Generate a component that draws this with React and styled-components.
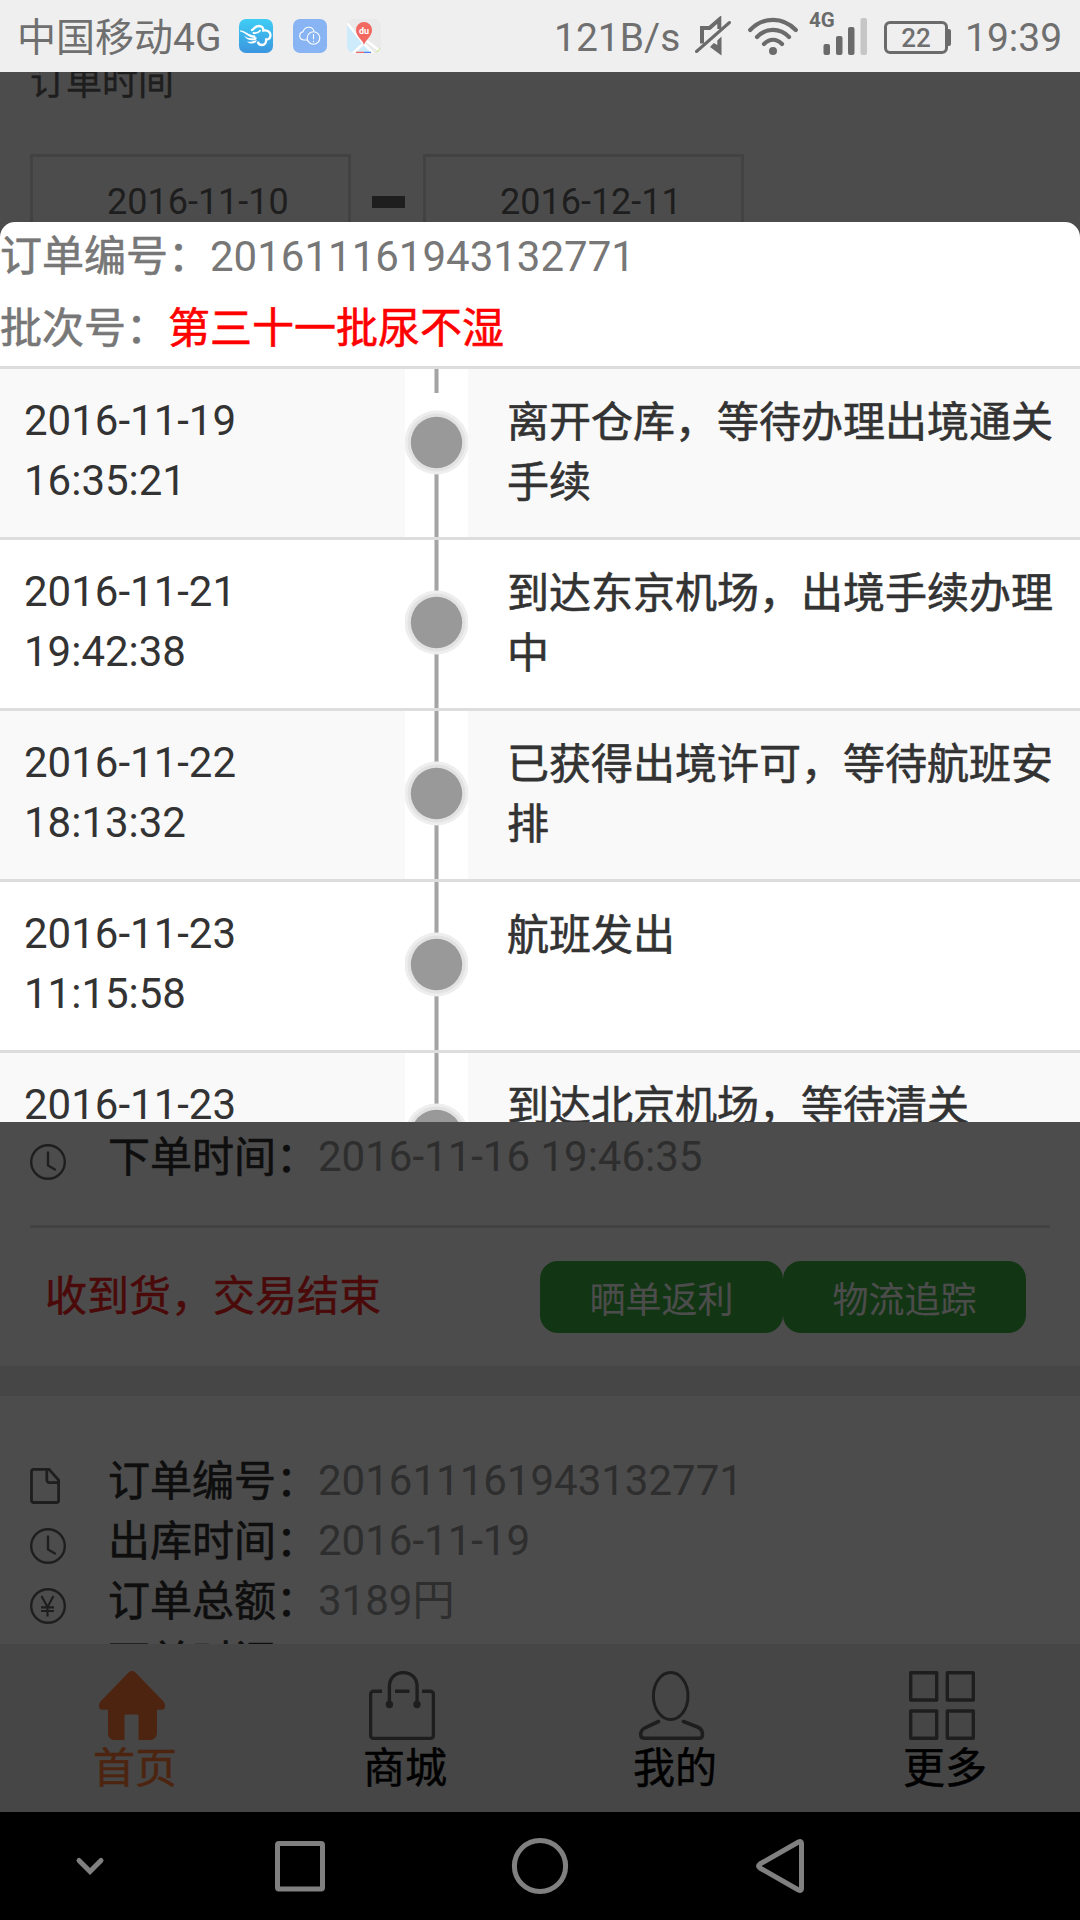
import React from "react";
import styled, { createGlobalStyle } from "styled-components";

const steps = [
  { date: "2016-11-19", time: "16:35:21", text: "离开仓库，等待办理出境通关手续" },
  { date: "2016-11-21", time: "19:42:38", text: "到达东京机场，出境手续办理中" },
  { date: "2016-11-22", time: "18:13:32", text: "已获得出境许可，等待航班安排" },
  { date: "2016-11-23", time: "11:15:58", text: "航班发出" },
  { date: "2016-11-23", time: "", text: "到达北京机场，等待清关" },
];

const ClockIcon = () => (
  <svg width="36" height="36" viewBox="0 0 36 36" fill="none" stroke="#666" strokeWidth="2.4">
    <circle cx="18" cy="18" r="16.8" />
    <path d="M18 8.500v13l7 4" strokeLinecap="round" strokeLinejoin="round" />
  </svg>
);

const FileIcon = () => (
  <svg width="36" height="36" viewBox="0 0 36 36" fill="none" stroke="#666" strokeWidth="2.8">
    <path d="M3.5 1.4H19L28.6 12v20.5a2 2 0 0 1-2 2H3.5a2 2 0 0 1-2-2V3.4a2 2 0 0 1 2-2z" />
    <path d="M16.8 1.4V12a2.6 2.6 0 0 0 2.6 2.6h9.2" />
  </svg>
);

const YenIcon = () => (
  <svg width="36" height="36" viewBox="0 0 36 36" fill="none" stroke="#666" strokeWidth="2.2">
    <circle cx="18" cy="18" r="16.8" strokeWidth="2.4" />
    <path d="M11.5 8l6 11 6-11M17.5 19v9.5M11 19.3h13M11 23h13" />
  </svg>
);

const WeatherAppIcon = () => (
  <svg width="34" height="34" viewBox="0 0 34 34">
    <defs>
      <linearGradient id="sky" x1="0" y1="0" x2="0" y2="1">
        <stop offset="0" stopColor="#3fcdf5" />
        <stop offset="1" stopColor="#3b96df" />
      </linearGradient>
    </defs>
    <rect width="34" height="34" rx="7" fill="url(#sky)" />
    <path d="M1 11.5c5-.8 7 4.500 15 5l1 2.500C9 19 7 13.500 1 12.500z" fill="#fff" />
    <path d="M5 16.500c4 3.500 8 3 13 2l-1 2.300c-5 1.200-9 .7-12-4.300z" fill="#fff" />
    <path d="M8 22.500c4 1 6-.5 10-1.500l-1.500 2.500c-3 1.500-6 1.500-8.500-1z" fill="#fff" />
    <g fill="none" stroke="#fff" strokeWidth="2.300" strokeLinecap="round">
      <path d="M13 11c2-.5 2.500-4 7-4 3 0 4.500 2 4.300 4.500 4-.5 7 1 7.200 4.500 0 2.800-1.800 4.500-4.300 4.500 0 3.500-1.700 5.500-4.200 5.500-2.500 0-3.500-1.200-4-2.500" />
      <path d="M14.500 14c3 .5 5-.2 6.500-2.200" strokeWidth="1.800" />
    </g>
  </svg>
);

const CloudAppIcon = () => (
  <svg width="34" height="34" viewBox="0 0 34 34">
    <rect width="34" height="34" rx="7" fill="#88b4f4" />
    <g fill="none" stroke="#fff" strokeWidth="1.1">
      <path d="M14 21H10.500a4.200 4.200 0 0 1-.4-8.300C11 9.800 13 8.300 15.700 8.300c3 0 5 2 5.300 4.200" />
      <circle cx="20.500" cy="19" r="6.300" />
      <path d="M20.500 15v5.300M20.500 21.800v1.500" />
    </g>
  </svg>
);

const MapAppIcon = () => (
  <svg width="34" height="34" viewBox="0 0 34 34">
    <defs>
      <clipPath id="tile">
        <rect width="34" height="34" rx="7" />
      </clipPath>
    </defs>
    <g clipPath="url(#tile)">
      <rect width="34" height="34" fill="#eaeaea" />
      <path d="M0 6l16 18-11 10H0z" fill="#cdebfb" />
      <path d="M16 25l8 9H8z" fill="#cdebfb" />
      <path d="M0 4l17 21 10 10" stroke="#fff" strokeWidth="2.500" fill="none" />
      <path d="M5 35l11-10M20 22l14 11" stroke="#fff" strokeWidth="2.500" fill="none" />
      <path d="M28 34l6-6v6z" fill="#d3eba4" />
      <path d="M9 33.500h8" stroke="#f2675f" strokeWidth="1.500" />
      <path d="M17 33.500h7" stroke="#4f80f0" strokeWidth="1.500" />
      <path d="M17 26c-.8-5-8-8-8-15a8 8 0 0 1 16 0c0 7-7.200 10-8 15z" fill="#f2675f" />
      <text x="17" y="14.500" textAnchor="middle" fontSize="9" fontWeight="700" fontFamily="Roboto" fill="#fff">
        du
      </text>
    </g>
  </svg>
);

const MuteIcon = () => (
  <svg width="36" height="40" viewBox="0 0 36 40" fill="none" stroke="#6b6b6b">
    <path d="M7 27.500V12h7.500L24.300 3.500V13" strokeWidth="4" />
    <path d="M15 31l11.500 8.500V20.500l-4.200 4V29l-3.500-2z" fill="#6b6b6b" stroke="none" />
    <path d="M1.500 35.500L34.500 6.500" strokeWidth="3" strokeLinecap="round" />
  </svg>
);

const WifiIcon = () => (
  <svg width="50" height="38" viewBox="0 0 50 38" fill="none" stroke="#6b6b6b" strokeWidth="4.2" strokeLinecap="round">
    <path d="M2.200 13C15-.6 35-.6 47.800 13" />
    <path d="M9 20C18 10.500 32 10.500 41 20" />
    <path d="M16 27c5.500-5.500 12.500-5.500 18 0" />
    <circle cx="25" cy="34" r="4" fill="#6b6b6b" stroke="none" />
  </svg>
);

const SignalIcon = () => (
  <svg width="60" height="46" viewBox="0 0 60 46" fill="#6b6b6b">
    <text x="0" y="17" fontSize="20.5" fontWeight="700" fontFamily="Roboto">
      4G
    </text>
    <rect x="14.500" y="34" width="6.500" height="11" rx="2" />
    <rect x="27" y="26" width="6.500" height="19" rx="2" />
    <rect x="39" y="17" width="6.500" height="28" rx="2" />
    <rect x="51.500" y="8" width="6.500" height="37" rx="2" fill="#c6c6c6" />
  </svg>
);

const HomeIcon = () => (
  <svg width="66" height="69" viewBox="0 0 66 69" fill="#ff7a38">
    <path d="M29.500 1.500a5 5 0 0 1 7 0L64.500 30.500c1.200 1.500 1.500 3 1.500 5 0 2-1 3.200-3 3.200H58V62a7 7 0 0 1-7 7H39.500V44.500a1 1 0 0 0-1-1H26.500a1 1 0 0 0-1 1V69H15a6 6 0 0 1-6-6V38.700H3c-2 0-3-1.200-3-3.200 0-2 .5-3.500 1.500-5z" />
  </svg>
);

const BagIcon = () => (
  <svg width="66" height="69" viewBox="0 0 66 69" fill="none" stroke="#666" strokeWidth="3.4">
    <path d="M13 20.300H4.600a3 3 0 0 0-3 3V64.400a3 3 0 0 0 3 3H61.400a3 3 0 0 0 3-3V23.300a3 3 0 0 0-3-3H53M26 20.300H40.500" />
    <path d="M20.400 34V15.500c0-18.600 27.700-18.600 27.700 0V34" />
    <circle cx="20.400" cy="33.500" r="3.700" fill="#666" stroke="none" />
    <circle cx="48" cy="33.500" r="3.700" fill="#666" stroke="none" />
  </svg>
);

const UserIcon = () => (
  <svg width="66" height="69" viewBox="0 0 66 69" fill="none" stroke="#666" strokeWidth="3">
    <ellipse cx="31.700" cy="25" rx="17.300" ry="23.500" />
    <path
      d="M19.500 50.500L6.500 56.500C3 58.300 1.700 60.500 1.700 63.500c0 2.300 1 3.700 3.500 3.700H60c2.500 0 3.500-1.400 3.500-3.700 0-3.500-1.500-6-5-7.500L44.500 50.500"
      strokeWidth="3.6"
      strokeLinecap="round"
    />
  </svg>
);

const GridIcon = () => (
  <svg width="66" height="69" viewBox="0 0 66 69" fill="none" stroke="#666" strokeWidth="3.4" strokeLinejoin="round">
    <rect x="1.700" y="1.700" width="26" height="27.300" />
    <rect x="38.300" y="1.700" width="26" height="27.300" />
    <rect x="1.700" y="40" width="26" height="27.300" />
    <rect x="38.300" y="40" width="26" height="27.300" />
  </svg>
);

const StepMark = ({ first }) => (
  <svg width="63" height="168" viewBox="0 0 63 168">
    <rect width="63" height="168" fill="#fff" />
    <rect x="29" width="5" height={first ? 24 : 168} fill="#cfcfcf" />
    <rect x="30" width="3" height={first ? 24 : 168} fill="#a4a4a4" />
    {first && <rect x="29" y="74" width="5" height="94" fill="#cfcfcf" />}
    {first && <rect x="30" y="74" width="3" height="94" fill="#a4a4a4" />}
    <circle cx="31.500" cy={first ? 73.5 : 82.5} r="32" fill="#eee" />
    <circle cx="31.500" cy={first ? 73.5 : 82.5} r="29" fill="#e2e2e2" />
    <circle cx="31.500" cy={first ? 73.5 : 82.5} r="25.700" fill="#999" />
  </svg>
);

const tabs = [
  { label: "首页", icon: <HomeIcon />, active: true },
  { label: "商城", icon: <BagIcon /> },
  { label: "我的", icon: <UserIcon /> },
  { label: "更多", icon: <GridIcon /> },
];

const App = () => {
  return (
    <Screen>
      <GlobalStyle />
      <StatusBar>
        <Carrier>中国移动4G</Carrier>
        <AppIcons>
          <WeatherAppIcon />
          <CloudAppIcon />
          <MapAppIcon />
        </AppIcons>
        <Speed>121B/s</Speed>
        <StatusIcons>
          <MuteIcon />
          <WifiIcon />
          <SignalIcon />
          <Battery>22</Battery>
        </StatusIcons>
        <Clock>19:39</Clock>
      </StatusBar>

      <Viewport>
        <Page>
          <Filter>
            <h2>订单时间</h2>
            <DateRange>
              <DateBox>2016-11-10</DateBox>
              <Dash />
              <DateBox>2016-12-11</DateBox>
            </DateRange>
          </Filter>

          <Order>
            <OrderLine>
              <ClockIcon />
              <Label>下单时间：</Label>
              <Value>2016-11-16 19:46:35</Value>
            </OrderLine>
            <OrderFooter>
              <State>收到货，交易结束</State>
              <Button>晒单返利</Button>
              <Button>物流追踪</Button>
            </OrderFooter>
          </Order>

          <Gap />

          <NextOrder>
            <OrderLine>
              <FileIcon />
              <Label>订单编号：</Label>
              <Value>201611161943132771</Value>
            </OrderLine>
            <OrderLine>
              <ClockIcon />
              <Label>出库时间：</Label>
              <Value>2016-11-19</Value>
            </OrderLine>
            <OrderLine>
              <YenIcon />
              <Label>订单总额：</Label>
              <Value>3189円</Value>
            </OrderLine>
            <OrderLine>
              <ClockIcon />
              <Label>下单时间：</Label>
            </OrderLine>
          </NextOrder>
        </Page>

        <TabBar>
          {tabs.map((tab) => (
            <Tab key={tab.label} $active={tab.active}>
              {tab.icon}
              <span>{tab.label}</span>
            </Tab>
          ))}
        </TabBar>

        <Mask />
        <Dialog>
          <DialogHead>
            <p>
              <b>订单编号：</b>201611161943132771
            </p>
            <p>
              <b>批次号：</b>
              <em>第三十一批尿不湿</em>
            </p>
          </DialogHead>
          {steps.map((step, i) => (
            <Step key={i} $striped={i % 2 === 0}>
              <StepTime>
                {step.date}
                <br />
                {step.time}
              </StepTime>
              <StepMark first={i === 0} />
              <StepText>{step.text}</StepText>
            </Step>
          ))}
        </Dialog>
      </Viewport>

      <NavBar>
        <svg width="1080" height="108" viewBox="0 0 1080 108" fill="none" stroke="#808080" strokeWidth="5">
          <path d="M79 48.500l11 11 11-11" strokeLinecap="round" />
          <rect x="277.500" y="31.500" width="45" height="45.500" rx="1.5" />
          <circle cx="540" cy="54" r="25.600" />
          <path d="M801.500 31.500v45q0 3-3 1.500L760 56q-3-2 0-4L798.500 30q3-1.500 3 1.500z" />
        </svg>
      </NavBar>
    </Screen>
  );
};

const GlobalStyle = createGlobalStyle`
  * {
    box-sizing: border-box;
    margin: 0;
    padding: 0;
  }
  body {
    background: #000;
    font-family: Roboto, "Noto Sans CJK SC", sans-serif;
  }
  svg {
    display: block;
    flex-shrink: 0;
  }
`;

const Screen = styled.div`
  width: 1080px;
  height: 1920px;
  display: flex;
  flex-direction: column;
  overflow: hidden;
`;

const StatusBar = styled.header`
  height: 72px;
  flex-shrink: 0;
  display: flex;
  align-items: center;
  background: #efefef;
  color: #6f6f6f;
  font-size: 39px;
  line-height: 68px;
  white-space: nowrap;
`;

const Carrier = styled.div`
  width: 239px;
  padding: 4px 0 0 17px;
`;

const AppIcons = styled.div`
  width: 315px;
  display: flex;
  gap: 20px;
`;

const Speed = styled.div`
  width: 141px;
  padding-top: 3px;
`;

const StatusIcons = styled.div`
  display: flex;
  align-items: center;
  width: 270px;
  svg:nth-child(2) {
    margin-left: 17px;
  }
  svg:nth-child(3) {
    margin: -6px 15px 0 11px;
  }
`;

const Battery = styled.div`
  position: relative;
  width: 64px;
  height: 33px;
  margin-top: 2px;
  border: 3px solid #6b6b6b;
  border-radius: 6px;
  font-size: 26px;
  font-weight: 500;
  line-height: 28px;
  text-align: center;
  &::after {
    content: "";
    position: absolute;
    right: -6px;
    top: 5px;
    width: 4px;
    height: 17px;
    border-radius: 0 2px 2px 0;
    background: #6b6b6b;
  }
`;

const Clock = styled.div`
  flex: 1;
  padding-top: 3px;
`;

const Viewport = styled.main`
  position: relative;
  height: 1740px;
  flex-shrink: 0;
  display: flex;
  flex-direction: column;
  overflow: hidden;
`;

const Page = styled.div`
  height: 1572px;
  overflow: hidden;
  background: #fff;
`;

const Filter = styled.section`
  height: 1054px;
  padding: 0 30px;
  h2 {
    height: 64px;
    color: #666;
    font-size: 36px;
    font-weight: 400;
    line-height: 22px;
    -webkit-text-stroke: 0.4px;
  }
`;

const DateRange = styled.div`
  display: flex;
  align-items: flex-start;
  margin-top: 18px;
`;

const DateBox = styled.div`
  width: 321px;
  height: 96px;
  padding-left: 74px;
  border: 3px solid #ddd;
  color: #666;
  font-size: 36px;
  line-height: 90px;
`;

const Dash = styled.div`
  width: 33px;
  height: 12px;
  margin: 42px 18px 0 21px;
  background: #666;
`;

const Order = styled.section`
  padding: 0 30px;
`;

const OrderLine = styled.div`
  height: 60px;
  display: flex;
  align-items: center;
  font-size: 42px;
  line-height: 60px;
  white-space: nowrap;
  svg {
    margin-top: 12px;
  }
  /* the file glyph is narrower but shares the 36px slot */
  span {
    padding-top: 1px;
  }
`;

const Label = styled.span`
  width: 210px;
  margin: 2px 0 0 42px;
  color: #303030;
  -webkit-text-stroke: 0.6px;
`;

const Value = styled.span`
  color: #999;
`;

const OrderFooter = styled.div`
  display: flex;
  align-items: center;
  height: 141px;
  margin-top: 39px;
  padding: 0 24px 0 15px;
  border-top: 3px solid #ddd;
`;

const State = styled.p`
  flex: 1;
  color: #f92222;
  font-size: 42px;
  line-height: 60px;
  -webkit-text-stroke: 0.5px;
`;

const Button = styled.button`
  width: 243px;
  height: 72px;
  border: none;
  border-radius: 18px;
  background: #3eb440;
  color: #fff;
  font-family: inherit;
  font-size: 36px;
`;

const Gap = styled.div`
  height: 30px;
  background: #eaeaea;
`;

const NextOrder = styled.section`
  padding: 54px 30px 0;
`;

const TabBar = styled.nav`
  height: 168px;
  display: grid;
  grid-template-columns: repeat(4, 1fr);
  background: #eaeaea;
`;

const Tab = styled.div`
  display: flex;
  flex-direction: column;
  align-items: center;
  padding-top: 27px;
  color: ${(props) => (props.$active ? "#ff7a38" : "#000")};
  font-size: 42px;
  line-height: 58px;
  -webkit-text-stroke: 0.5px;
  svg {
    margin-right: 6px;
  }
`;

const Mask = styled.div`
  position: absolute;
  inset: 0;
  background: rgba(0, 0, 0, 0.7);
`;

const Dialog = styled.section`
  position: absolute;
  top: 150px;
  left: 0;
  width: 1080px;
  height: 900px;
  overflow: hidden;
  border-radius: 15px 15px 0 0;
  background: #fff;
`;

const DialogHead = styled.div`
  height: 147px;
  border-bottom: 3px solid #ddd;
  color: #777;
  font-size: 42px;
  line-height: 69px;
  p {
    height: 72px;
  }
  b,
  em {
    font-style: normal;
    font-weight: 400;
    -webkit-text-stroke: 0.6px;
  }
  em {
    color: #f00;
  }
`;

const Step = styled.div`
  height: 171px;
  display: flex;
  border-bottom: 3px solid #ddd;
  background: ${(props) => (props.$striped ? "#f9f9f9" : "#fff")};
  color: #333;
  font-size: 42px;
  line-height: 60px;
`;

const StepTime = styled.div`
  width: 405px;
  padding: 22px 24px;
`;

const StepText = styled.div`
  flex: 1;
  padding: 24px 24px 0 39px;
  -webkit-text-stroke: 0.6px;
`;

const NavBar = styled.footer`
  height: 108px;
  flex-shrink: 0;
  background: #000;
`;

export default App;
